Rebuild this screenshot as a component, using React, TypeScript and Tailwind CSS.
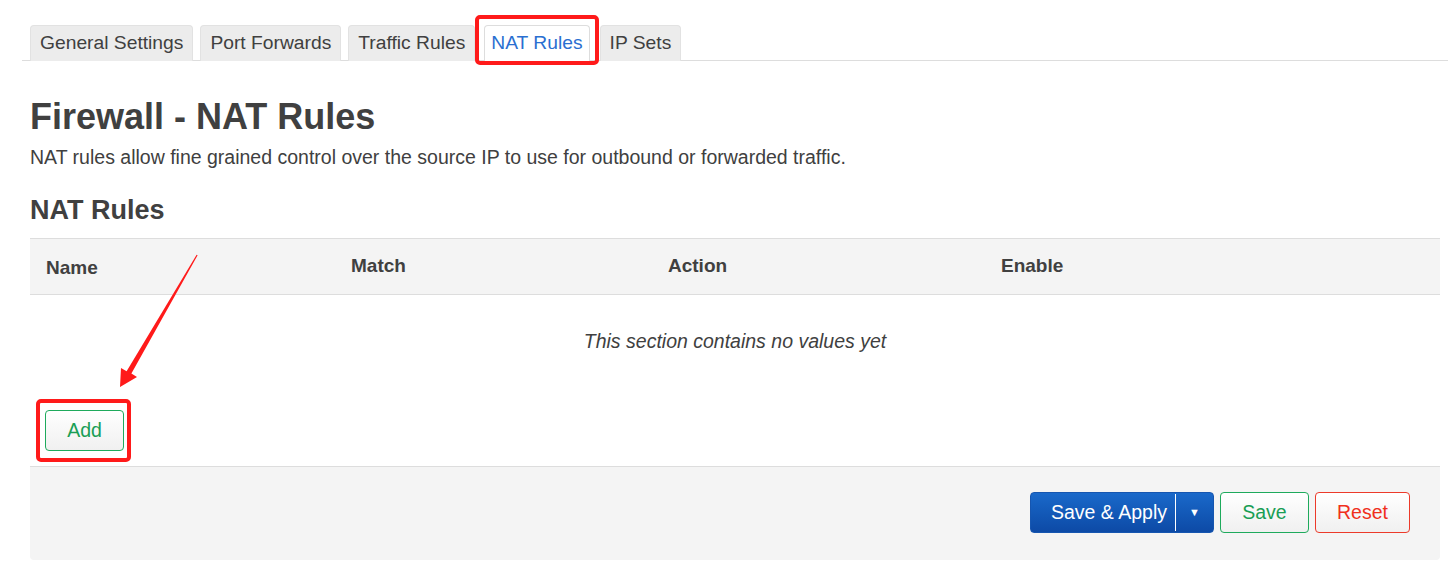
import React from "react";

const tabs = ["General Settings", "Port Forwards", "Traffic Rules", "NAT Rules", "IP Sets"];

const cols = [
  { label: "Name", cls: "pt-[4px]" },
  { label: "Match", cls: "" },
  { label: "Action", cls: "" },
  { label: "Enable", cls: "" },
];

function Arrow() {
  // annotation arrow pointing at the Add button
  return (
    <svg
      className="pointer-events-none absolute left-0 top-0"
      width="1453"
      height="577"
      viewBox="0 0 1453 577"
    >
      <polygon
        fill="#ff1a1a"
        points="197.6,255.3 131.4,373.6 137,377 120,387 121,368 126.6,371.2 196.6,254.8"
      />
    </svg>
  );
}

export default function App() {
  return (
    <div
      className="relative h-[577px] w-[1453px] overflow-hidden bg-white text-[#404040]"
      style={{ fontFamily: '"Liberation Sans", Arial, sans-serif' }}
    >
      <div className="pl-[22px] pr-[5px] pt-[25px]">
        {/* tabs */}
        <ul className="flex gap-[7px] border-b border-[#dddddd] pl-[8px]">
          {tabs.map((t) => {
            const active = t === "NAT Rules";
            return (
              <li key={t} className={active ? "relative -mb-px ml-[2px] mr-[3px]" : "relative -mb-px"}>
                <div
                  className={
                    active
                      ? "h-[36px] rounded-t-[4px] border border-b-0 border-[#dddddd] bg-white px-[6px] pt-[6px] text-[19.25px] leading-[22px] text-[#2a6fd1]"
                      : "h-[36px] rounded-t-[4px] border border-b-0 border-[#e2e2e2] bg-[#ececec] px-[9px] pt-[6px] text-[19.25px] leading-[22px] text-[#404040]"
                  }
                >
                  {t}
                </div>
                {active && (
                  <span className="pointer-events-none absolute -left-[9px] -right-[9px] -top-[10px] -bottom-[4px] rounded-[5px] border-4 border-[#ff1a1a]" />
                )}
              </li>
            );
          })}
        </ul>

        <div className="pl-[8px] pr-[8px]">
          <h1 className="mt-[36px] text-[36px] font-bold leading-[40px]">Firewall - NAT Rules</h1>
          <p className="mt-[8px] text-[19.5px] leading-[24px]">
            NAT rules allow fine grained control over the source IP to use for outbound or forwarded traffic.
          </p>

          <h3 className="mt-[26px] text-[27px] font-bold leading-[30px]">NAT Rules</h3>

          {/* table */}
          <div className="mt-[13px]">
            <div className="grid h-[57px] grid-cols-[305px_317px_333px_1fr] border-y border-[#dddddd] bg-[#f4f4f4] pb-[1px] text-[19px] font-bold">
              {cols.map((c) => (
                <div key={c.label} className={`flex items-center px-[16px] ${c.cls}`}>
                  {c.label}
                </div>
              ))}
            </div>
            <div className="pt-[34px] text-center text-[19.5px] italic leading-[24px]">
              This section contains no values yet
            </div>
            <div className="pl-[15px] pt-[57px] pb-[15px]">
              <div className="relative inline-block">
                <button className="h-[41px] w-[79px] rounded-[4px] border border-[#1eaa5c] bg-gradient-to-b from-white to-[#f0f0f0] text-[19.5px] text-[#1a9e55]">
                  Add
                </button>
                <span className="pointer-events-none absolute -left-[9px] -right-[7px] -top-[11px] -bottom-[11px] rounded-[5px] border-4 border-[#ff1a1a]" />
              </div>
            </div>
          </div>

          {/* footer */}
          <div className="flex h-[94px] items-center justify-end gap-[6px] rounded-b-[4px] border-t border-[#dddddd] bg-[#f4f4f4] pr-[30px] pb-[2px]">
            <div className="flex h-[41px] w-[184px] overflow-hidden rounded-[4px] border border-[#1656b0] bg-gradient-to-b from-[#1a69ca] to-[#0d4aa6] text-white">
              <div className="flex flex-1 items-center pl-[20px] text-[19.5px]">Save &amp; Apply</div>
              <div className="my-[1px] w-px bg-white" />
              <div className="flex w-[37px] items-center justify-center text-[11px]">▼</div>
            </div>
            <button className="h-[41px] w-[89px] rounded-[4px] border border-[#1eaa5c] bg-gradient-to-b from-white to-[#f0f0f0] text-[19.5px] text-[#1a9e55]">
              Save
            </button>
            <button className="h-[41px] w-[95px] rounded-[4px] border border-[#ec3a2a] bg-gradient-to-b from-white to-[#f0f0f0] text-[19.5px] text-[#f0301c]">
              Reset
            </button>
          </div>
        </div>
      </div>
      <Arrow />
    </div>
  );
}
